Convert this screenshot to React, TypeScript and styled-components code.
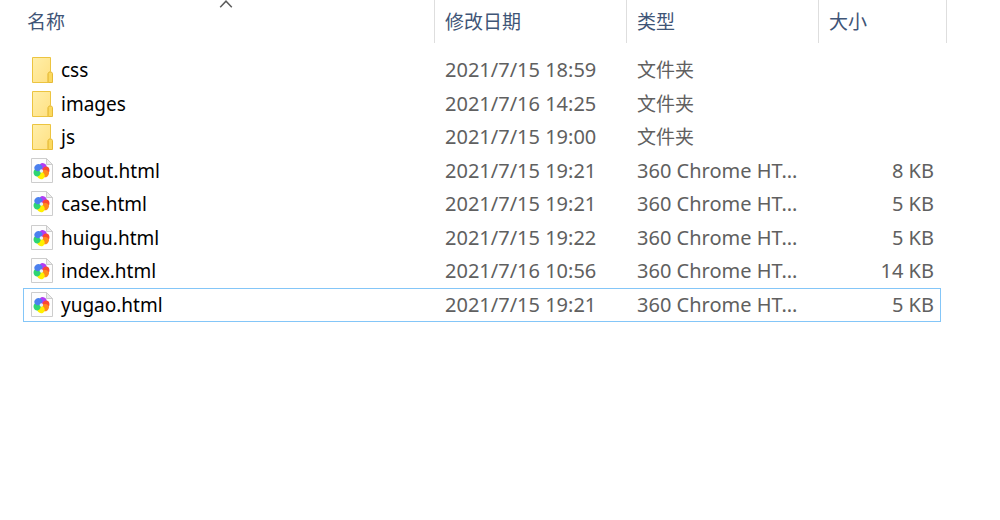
import React from 'react';
import styled, { createGlobalStyle } from 'styled-components';

const GlobalStyle = createGlobalStyle`
  * { box-sizing: border-box; }
  body {
    margin: 0;
    background: #fff;
    font-family: "Noto Sans", "Noto Sans CJK SC", sans-serif;
  }
`;

const Page = styled.main`
  padding: 0 53px 8px 18px;
`;

const FileTable = styled.table`
  width: 100%;
  table-layout: fixed;
  border-collapse: separate;
  border-spacing: 0;
`;

const Column = styled.col<{ $width?: number }>`
  width: ${({ $width }) => ($width ? `${$width}px` : 'auto')};
`;

const HeaderCell = styled.th`
  padding: 0 0 11px;
  text-align: left;
  font-weight: 400;
`;

const HeaderButton = styled.button<{ $indent: number }>`
  position: relative;
  display: flex;
  align-items: center;
  width: 100%;
  height: 43px;
  padding: 0 0 2px ${({ $indent }) => $indent}px;
  border: 0;
  border-right: 1px solid #dedede;
  background: none;
  color: #3f5577;
  font-family: "Noto Sans CJK SC", sans-serif;
  font-size: 19px;
  line-height: 28px;
  text-align: left;
`;

const SortArrow = styled.svg`
  position: absolute;
  top: 0;
  left: 50%;
  width: 14px;
  height: 8px;
  margin-left: -7px;
`;

const Row = styled.tr`
  position: relative;
  height: 34px;

  &:nth-child(odd) { height: 33px; }
`;

const Cell = styled.td<{ $cjk?: boolean }>`
  padding: 0 0 1px 10px;
  color: #606060;
  font-size: ${({ $cjk }) => ($cjk ? 19 : 20)}px;
  line-height: 28px;
  white-space: nowrap;
`;

const NameCell = styled(Cell)`
  padding-left: 12px;
  color: #000;
  font-size: 19px;
`;

const SizeCell = styled(Cell)`
  padding: 0 13px 1px 0;
  text-align: right;
`;

const NameContent = styled.div`
  display: flex;
  align-items: center;
  gap: 7px;
`;

const FocusFrame = styled.span`
  position: absolute;
  inset: 0 6px 0 5px;
  border: 1px solid #84c6f8;
  pointer-events: none;
`;

const IconBox = styled.svg`
  flex: none;
  width: 24px;
  height: 28px;
`;

const FolderIcon = () => (
  <IconBox viewBox="0 0 24 28" aria-hidden="true">
    <defs>
      <linearGradient id="folder" x1="0" y1="0" x2="1" y2="1">
        <stop offset="0" stopColor="#ffefaa" />
        <stop offset="1" stopColor="#ffe082" />
      </linearGradient>
    </defs>
    <path d="M2.5 1.5h18v14l-2.5 2v9H2.5z" fill="url(#folder)" stroke="#ecc440" />
    <path d="M18.2 26.5v-9l1-1.5h2.3l1 1.5v9z" fill="#fbd95f" stroke="#e6ba38" />
  </IconBox>
);

const petals = ['#b03cf4', '#fb4a30', '#ff8a1a', '#fff000', '#2ed573', '#4a80ee'];
const petalAngles = [10, 70, 115, 175, 240, 305];

const HtmlIcon = () => (
  <IconBox viewBox="0 0 24 28" aria-hidden="true">
    <path d="M1.5 1.5h15l6 6v18h-21z" fill="#fdfdfd" stroke="#cdcdcd" />
    <path d="M16.5 1.5v6h6z" fill="#ececec" stroke="#cdcdcd" />
    {petals.map((color, i) => (
      <path
        key={color}
        d="M11.4 13.2C8 11.8 7.4 7.4 10.6 6C14.8 5.2 17.4 8.8 15.4 12.6z"
        fill={color}
        transform={`rotate(${petalAngles[i]} 11.4 14)`}
      />
    ))}
    <circle cx="11.4" cy="14" r="1.8" fill="#e9f1fb" />
  </IconBox>
);

type Entry = {
  name: string;
  date: string;
  size?: string;
};

const entries: Entry[] = [
  { name: 'css', date: '2021/7/15 18:59' },
  { name: 'images', date: '2021/7/16 14:25' },
  { name: 'js', date: '2021/7/15 19:00' },
  { name: 'about.html', date: '2021/7/15 19:21', size: '8 KB' },
  { name: 'case.html', date: '2021/7/15 19:21', size: '5 KB' },
  { name: 'huigu.html', date: '2021/7/15 19:22', size: '5 KB' },
  { name: 'index.html', date: '2021/7/16 10:56', size: '14 KB' },
  { name: 'yugao.html', date: '2021/7/15 19:21', size: '5 KB' },
];

const headers = ['名称', '修改日期', '类型', '大小'];

export default function App() {
  return (
    <>
      <GlobalStyle />
      <Page lang="zh-CN">
        <FileTable>
          <colgroup>
            <Column />
            <Column $width={192} />
            <Column $width={192} />
            <Column $width={128} />
          </colgroup>
          <thead>
            <tr>
              {headers.map((label, i) => (
                <HeaderCell key={label} scope="col" aria-sort={i === 0 ? 'ascending' : undefined}>
                  <HeaderButton type="button" $indent={i === 0 ? 9 : 10}>
                    {label}
                    {i === 0 && (
                      <SortArrow viewBox="0 0 14 8" aria-hidden="true">
                        <path d="M1.2 7.2L7 1.2L12.8 7.2" fill="none" stroke="#5c5c5c" strokeWidth="1.5" />
                      </SortArrow>
                    )}
                  </HeaderButton>
                </HeaderCell>
              ))}
            </tr>
          </thead>
          <tbody>
            {entries.map((entry) => (
              <Row key={entry.name}>
                <NameCell>
                  <NameContent>
                    {entry.size ? <HtmlIcon /> : <FolderIcon />}
                    {entry.name}
                  </NameContent>
                  {entry.name === 'yugao.html' && <FocusFrame />}
                </NameCell>
                <Cell>{entry.date}</Cell>
                <Cell $cjk={!entry.size}>{entry.size ? '360 Chrome HT...' : '文件夹'}</Cell>
                <SizeCell>{entry.size}</SizeCell>
              </Row>
            ))}
          </tbody>
        </FileTable>
      </Page>
    </>
  );
}
